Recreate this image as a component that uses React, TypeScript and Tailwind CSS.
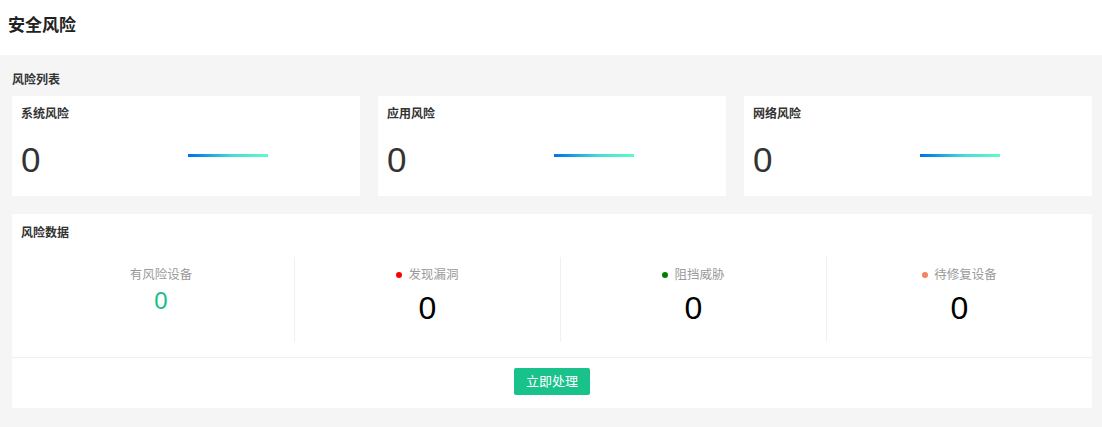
const font = "font-['Liberation_Sans','Noto_Sans_CJK_SC',sans-serif]";

const risks = ['系统风险', '应用风险', '网络风险'];

const stats = [
    { label: '发现漏洞', dot: 'bg-[#ff0000]', value: 0 },
    { label: '阻挡威胁', dot: 'bg-[#008000]', value: 0 },
    { label: '待修复设备', dot: 'bg-[#f5845c]', value: 0 },
];

function RiskCard({ title }: { title: string }) {
    return (
        <div className="bg-white h-[100px] px-[9px] pt-[9px]">
            <div className="text-[12px] font-bold text-[#333] leading-[18px]">{title}</div>
            <div className="grid grid-cols-2 mt-[17px]">
                <div className="text-[35px] leading-[40px] text-[#333]">0</div>
                <div className="flex items-start pt-[14px] pl-[2px]">
                    <div className="w-[80px] h-[3px] bg-gradient-to-r from-[#0b6ee6] via-[#45dcd8] via-55% to-[#5ffbc8]" />
                </div>
            </div>
        </div>
    );
}

export default function App() {
    return (
        <div className={`${font} w-[1102px] h-[427px] bg-[#f5f5f5] overflow-hidden`}>
            <div className="bg-white h-[55px] flex items-center pl-[8px] pb-[3px]">
                <h1 className="text-[17px] font-bold text-[#222]">安全风险</h1>
            </div>

            <div className="pl-[12px] pr-[10px]">
                <div className="h-[41px] flex items-center pt-[9px] text-[12px] font-bold text-[#333]">风险列表</div>

                <div className="grid grid-cols-3 gap-[18px]">
                    {risks.map((r) => (
                        <RiskCard key={r} title={r} />
                    ))}
                </div>

                <div className="bg-white mt-[18px] h-[194px] flex flex-col">
                    <div className="px-[9px] pt-[10px] text-[12px] font-bold text-[#333] leading-[18px]">风险数据</div>

                    <div className="grid grid-cols-4 pl-[16px] mt-[15px] h-[85px]">
                        <div className="flex flex-col items-center pt-[9px]">
                            <div className="text-[12.5px] text-[#9a9a9a] leading-[18px]">有风险设备</div>
                            <div className="text-[24px] leading-[28px] text-[#19be8b] mt-[3px]">0</div>
                        </div>
                        {stats.map((s) => (
                            <div key={s.label} className="flex flex-col items-center pt-[9px] border-l border-[#f0f0f0]">
                                <div className="flex items-center gap-[6px] text-[12.5px] text-[#9a9a9a] leading-[18px]">
                                    <span className={`w-[6px] h-[6px] rounded-full ${s.dot}`} />
                                    {s.label}
                                </div>
                                <div className="text-[32px] leading-[38px] text-black mt-[5px]">{s.value}</div>
                            </div>
                        ))}
                    </div>

                    <div className="mt-[15px] border-t border-[#f0f0f0] flex justify-center pt-[10px]">
                        <button className="w-[76px] h-[27px] rounded-[2px] bg-[#19c18b] text-white text-[13px]">立即处理</button>
                    </div>
                </div>
            </div>
        </div>
    );
}
